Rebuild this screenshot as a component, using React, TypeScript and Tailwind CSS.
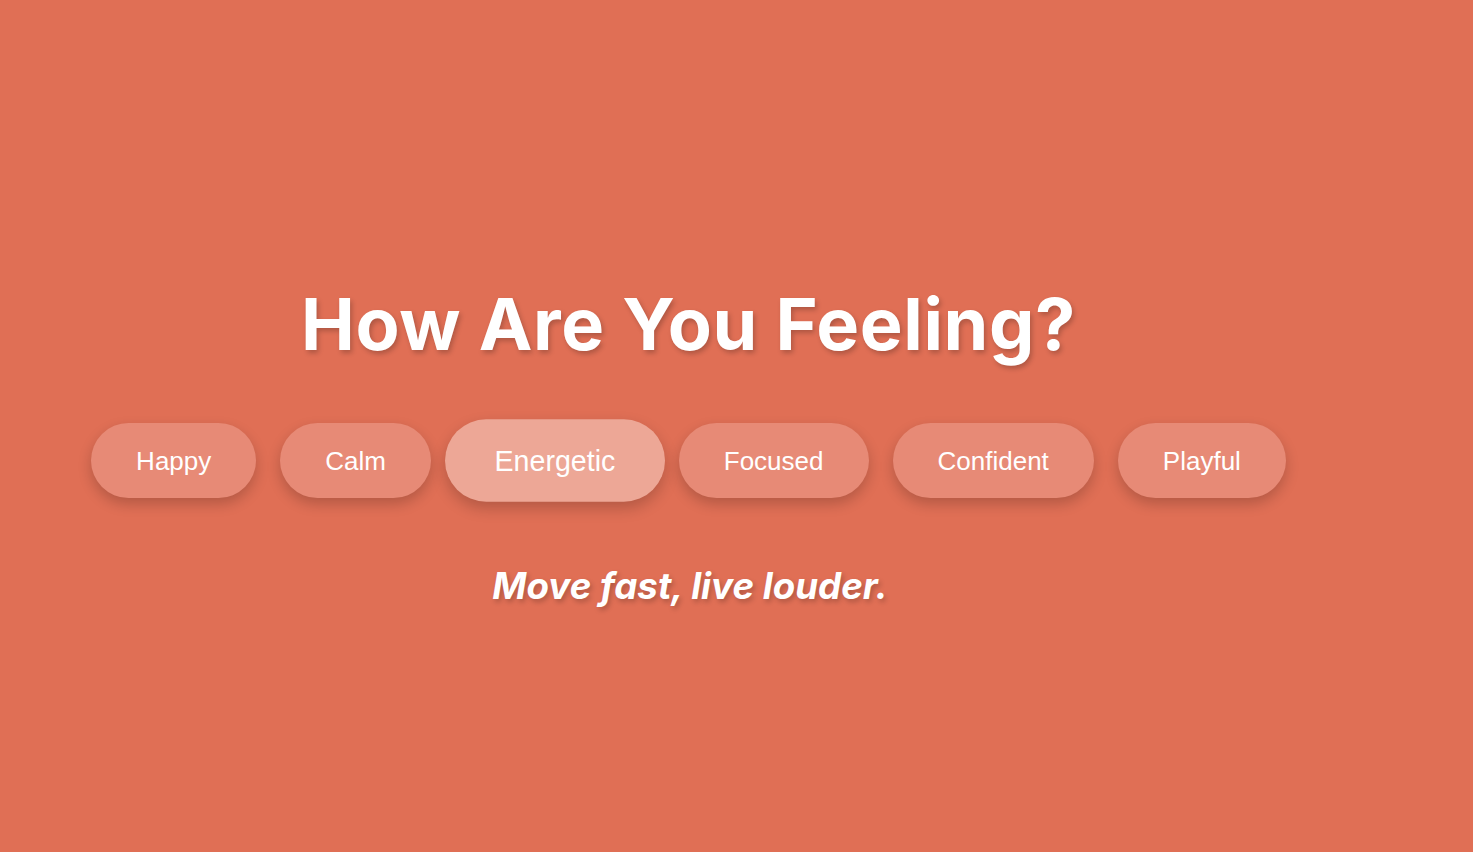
import React from 'react'

const moods = ['Happy', 'Calm', 'Energetic', 'Focused', 'Confident', 'Playful']
const active = 'Energetic'

export default function App() {
  return (
    <div className="min-h-screen w-full bg-[#E06F55] flex flex-col items-center pt-[288px] pr-[96px] text-white">
      <h1 className="font-['Inter','Noto_Sans',sans-serif] text-[72px] leading-none font-bold tracking-[0.6px] [text-shadow:2px_3px_5px_rgba(0,0,0,0.22)]">
        How Are You Feeling?
      </h1>

      <div className="mt-[63px] flex items-center gap-6 font-['Liberation_Sans',Arial,sans-serif]">
        {moods.map(m => (
          <button
            key={m}
            className={
              'h-[75px] px-[45px] rounded-full text-[26px] leading-none text-white shadow-[0_6px_14px_rgba(0,0,0,0.2)] ' +
              (m === active ? 'bg-[#EDA796] scale-110' : 'bg-[#E78A76]')
            }
          >
            {m}
          </button>
        ))}
      </div>

      <p className="mt-[70px] ml-[3px] font-['Inter','Noto_Sans',sans-serif] text-[36.7px] leading-none font-bold italic [text-shadow:2px_3px_5px_rgba(0,0,0,0.22)]">
        Move fast, live louder.
      </p>
    </div>
  )
}
